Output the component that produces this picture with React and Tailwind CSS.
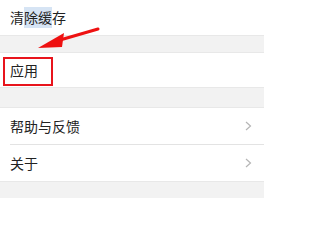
import React from "react";

const font = { fontFamily: '"Noto Sans CJK SC", "Noto Sans", sans-serif' };

function Chevron() {
  return (
    <svg width="7" height="10" viewBox="0 0 7 10" className="mr-[12px]">
      <path d="M1 1 L5.5 5 L1 9" fill="none" stroke="#b5b5b5" strokeWidth="1.2" />
    </svg>
  );
}

export default function App() {
  return (
    <div className="relative w-[271px] h-[204px] bg-white overflow-hidden" style={font}>
      <div className="w-[264px] h-[198px] flex flex-col bg-[#f2f2f2]">
        <div className="h-[35px] bg-white flex items-center pl-[10px] text-[14px] text-[#222]">
          清<span className="bg-[#d6e4f4]">除缓</span>存
        </div>
        <div className="h-[17px] border-t border-[#e8e8e8]" />
        <div className="h-[36px] bg-white flex items-center pl-[10px] text-[14px] text-[#222] border-y border-[#e8e8e8]">
          应用
        </div>
        <div className="h-[19px]" />
        <div className="bg-white flex flex-col border-t border-[#e8e8e8]">
          <div className="h-[36px] flex items-center justify-between pl-[10px] text-[14px] text-[#222]">
            <span>帮助与反馈</span>
            <Chevron />
          </div>
          <div className="h-px bg-[#e3e3e3] ml-[10px]" />
          <div className="h-[36px] flex items-center justify-between pl-[10px] text-[14px] text-[#222]">
            <span>关于</span>
            <Chevron />
          </div>
        </div>
        <div className="flex-1 border-t border-[#e8e8e8]" />
      </div>
      <div className="absolute left-[3px] top-[57px] w-[50px] h-[29px] border-2 border-[#e8141c]" />
      <svg className="absolute left-0 top-0" width="271" height="204" viewBox="0 0 271 204">
        <path d="M98 29 L60 40" stroke="#ee1111" strokeWidth="3" strokeLinecap="round" />
        <polygon points="38,48 64,33 62,47" fill="#ee1111" />
      </svg>
    </div>
  );
}
